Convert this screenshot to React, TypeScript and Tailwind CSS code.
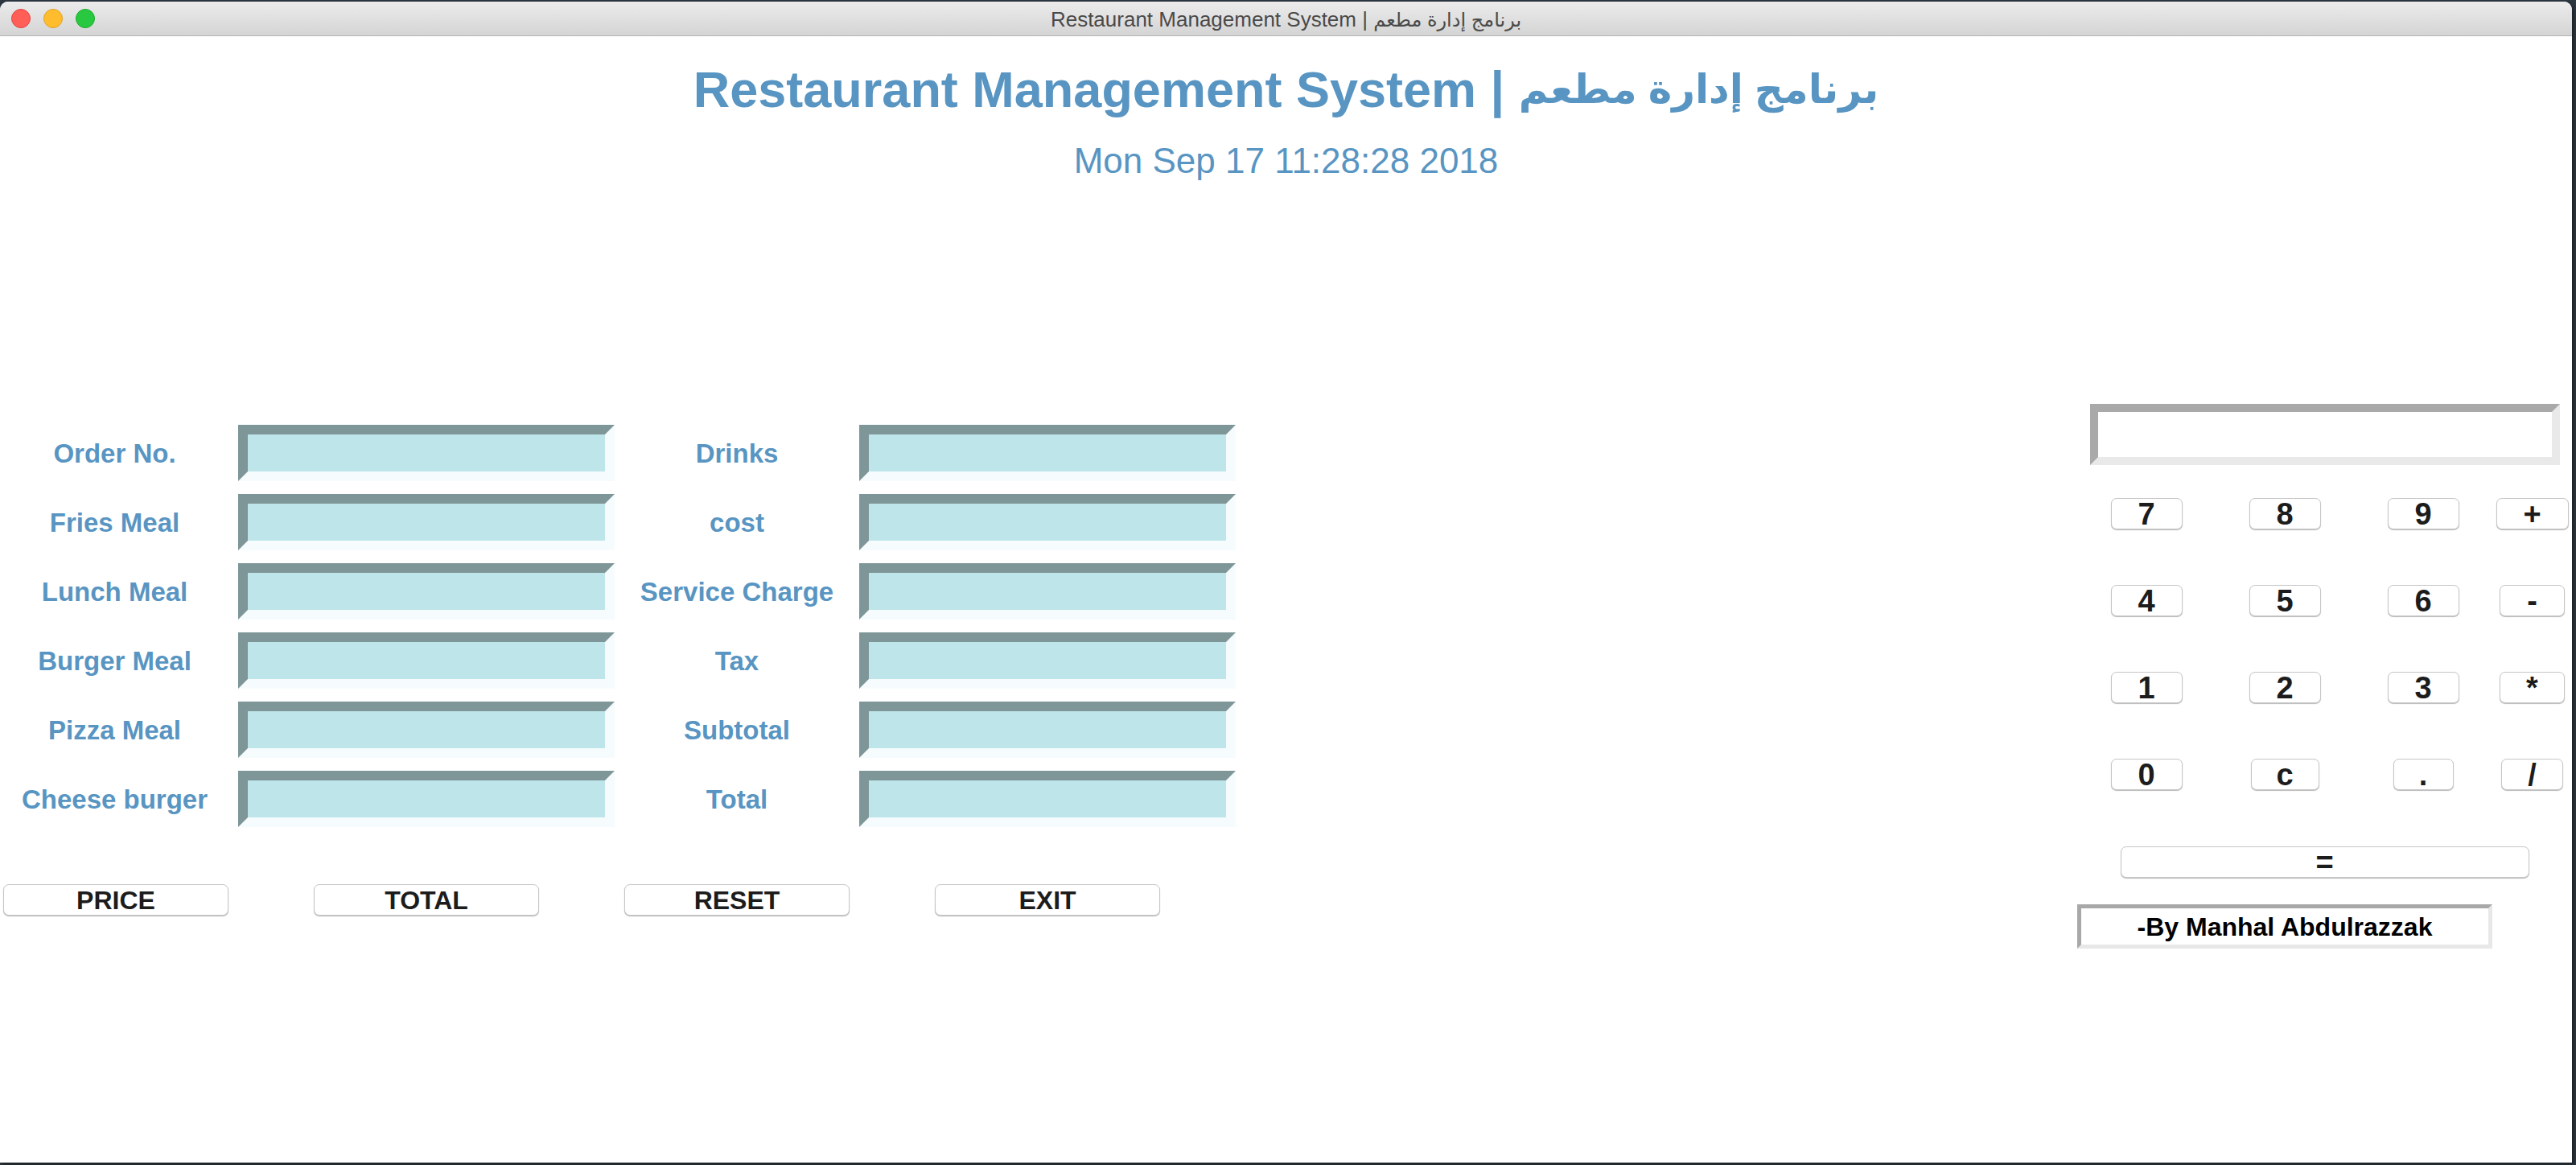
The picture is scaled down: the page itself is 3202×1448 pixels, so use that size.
import React from "react";

const leftLabels = ["Order No.", "Fries Meal", "Lunch Meal", "Burger Meal", "Pizza Meal", "Cheese burger"];
const rightLabels = ["Drinks", "cost", "Service Charge", "Tax", "Subtotal", "Total"];

const calcRows: { key: string; w: string }[][] = [
    [{ key: "7", w: "w-[89px]" }, { key: "8", w: "w-[89px]" }, { key: "9", w: "w-[89px]" }, { key: "+", w: "w-[90px]" }],
    [{ key: "4", w: "w-[89px]" }, { key: "5", w: "w-[89px]" }, { key: "6", w: "w-[89px]" }, { key: "-", w: "w-[81px]" }],
    [{ key: "1", w: "w-[89px]" }, { key: "2", w: "w-[89px]" }, { key: "3", w: "w-[89px]" }, { key: "*", w: "w-[81px]" }],
    [{ key: "0", w: "w-[89px]" }, { key: "c", w: "w-[85px]" }, { key: ".", w: "w-[75px]" }, { key: "/", w: "w-[77px]" }],
];

const Entry = () => (
    <input
        readOnly
        className="h-[70px] w-[468px] border-[12px] border-t-[#7e9698] border-l-[#7e9698] border-b-[#f6fcfd] border-r-[#f6fcfd] bg-[#bee5e9] outline-none"
    />
);

const Label = ({ text }: { text: string }) => (
    <div className="flex items-center justify-center text-[33px] font-bold leading-none text-[#5895c2] whitespace-nowrap">
        {text}
    </div>
);

const MacButton: React.FC<{ className?: string; children: React.ReactNode }> = ({ className, children }) => (
    <button
        className={`flex items-center justify-center rounded-[7px] border border-[#c6c6c6] bg-white shadow-[0_1px_1px_rgba(0,0,0,0.28)] font-bold leading-none text-[#1c1c1c] ${className ?? ""}`}
    >
        {children}
    </button>
);

const App: React.FC = () => {
    return (
        <div className="min-h-[1448px] w-[3202px] bg-[#2d3741] pt-[2px] font-['Liberation_Sans','DejaVu_Sans',sans-serif]">
            <div className="h-[1443px] w-[3197px] overflow-hidden rounded-t-[10px] bg-white shadow-[2px_2px_4px_rgba(0,0,0,0.5)]">
                {/* title bar */}
                <div className="relative flex h-[43px] items-center border-b border-[#b4b4b4] bg-gradient-to-b from-[#ececec] to-[#d4d4d4]">
                    <div className="flex gap-[16px] pl-[14px]">
                        <span className="h-[24px] w-[24px] rounded-full border border-[#e0443e] bg-[#ff5f57]" />
                        <span className="h-[24px] w-[24px] rounded-full border border-[#dea123] bg-[#ffbd2e]" />
                        <span className="h-[24px] w-[24px] rounded-full border border-[#1aab29] bg-[#28c940]" />
                    </div>
                    <p className="absolute inset-x-0 top-[9px] text-center text-[26px] leading-none text-[#4a4a4a]">
                        Restaurant Management System | <span className="text-[24px]">برنامج إدارة مطعم</span>
                    </p>
                </div>

                {/* header */}
                <div className="flex flex-col items-center pt-[35px]">
                    <h1 className="flex h-[62px] items-center text-[63px] font-bold leading-none text-[#5895c2]">
                        <span>Restaurant Management System |&nbsp;</span>
                        <span className="text-[50px]">برنامج إدارة مطعم</span>
                    </h1>
                    <p className="mt-[36px] text-[44px] leading-none text-[#5895c2]">Mon Sep 17 11:28:28 2018</p>
                </div>

                {/* body */}
                <div className="mt-[280px] flex items-start">
                    <div className="mt-[26px] flex flex-col">
                        <div className="grid grid-cols-[285px_468px_282px_468px] auto-rows-[70px] gap-x-[11px] gap-y-[16px]">
                            {leftLabels.map((l, i) => (
                                <React.Fragment key={l}>
                                    <Label text={l} />
                                    <Entry />
                                    <Label text={rightLabels[i]} />
                                    <Entry />
                                </React.Fragment>
                            ))}
                        </div>
                        <div className="ml-[4px] mt-[71px] flex gap-[106px]">
                            {["PRICE", "TOTAL", "RESET", "EXIT"].map((b) => (
                                <MacButton key={b} className="h-[39px] w-[280px] text-[32px]">
                                    {b}
                                </MacButton>
                            ))}
                        </div>
                    </div>

                    {/* calculator */}
                    <div className="ml-auto flex w-[615px] flex-col">
                        <input
                            readOnly
                            className="mx-auto h-[76px] w-[584px] border-[10px] border-t-[#a9a9a9] border-l-[#a9a9a9] border-b-[#e9e9e9] border-r-[#e9e9e9] bg-white outline-none"
                        />
                        <div className="mt-[41px] grid grid-cols-[172px_172px_172px_99px] auto-rows-[39px] gap-y-[69px]">
                            {calcRows.map((row) =>
                                row.map((k) => (
                                    <div key={k.key} className="flex justify-center">
                                        <MacButton className={`h-[39px] ${k.w} text-[38px]`}>{k.key}</MacButton>
                                    </div>
                                ))
                            )}
                        </div>
                        <div className="mt-[70px] flex justify-center">
                            <MacButton className="h-[39px] w-[508px] text-[38px]">=</MacButton>
                        </div>
                        <div className="mt-[33px] flex h-[55px] w-[516px] items-center justify-center border-[5px] border-t-[#a8a8a8] border-l-[#a8a8a8] border-b-[#e8e8e8] border-r-[#e8e8e8] text-[32px] font-bold leading-none text-black">
                            -By Manhal Abdulrazzak
                        </div>
                    </div>
                </div>
            </div>
        </div>
    );
};

export default App;
